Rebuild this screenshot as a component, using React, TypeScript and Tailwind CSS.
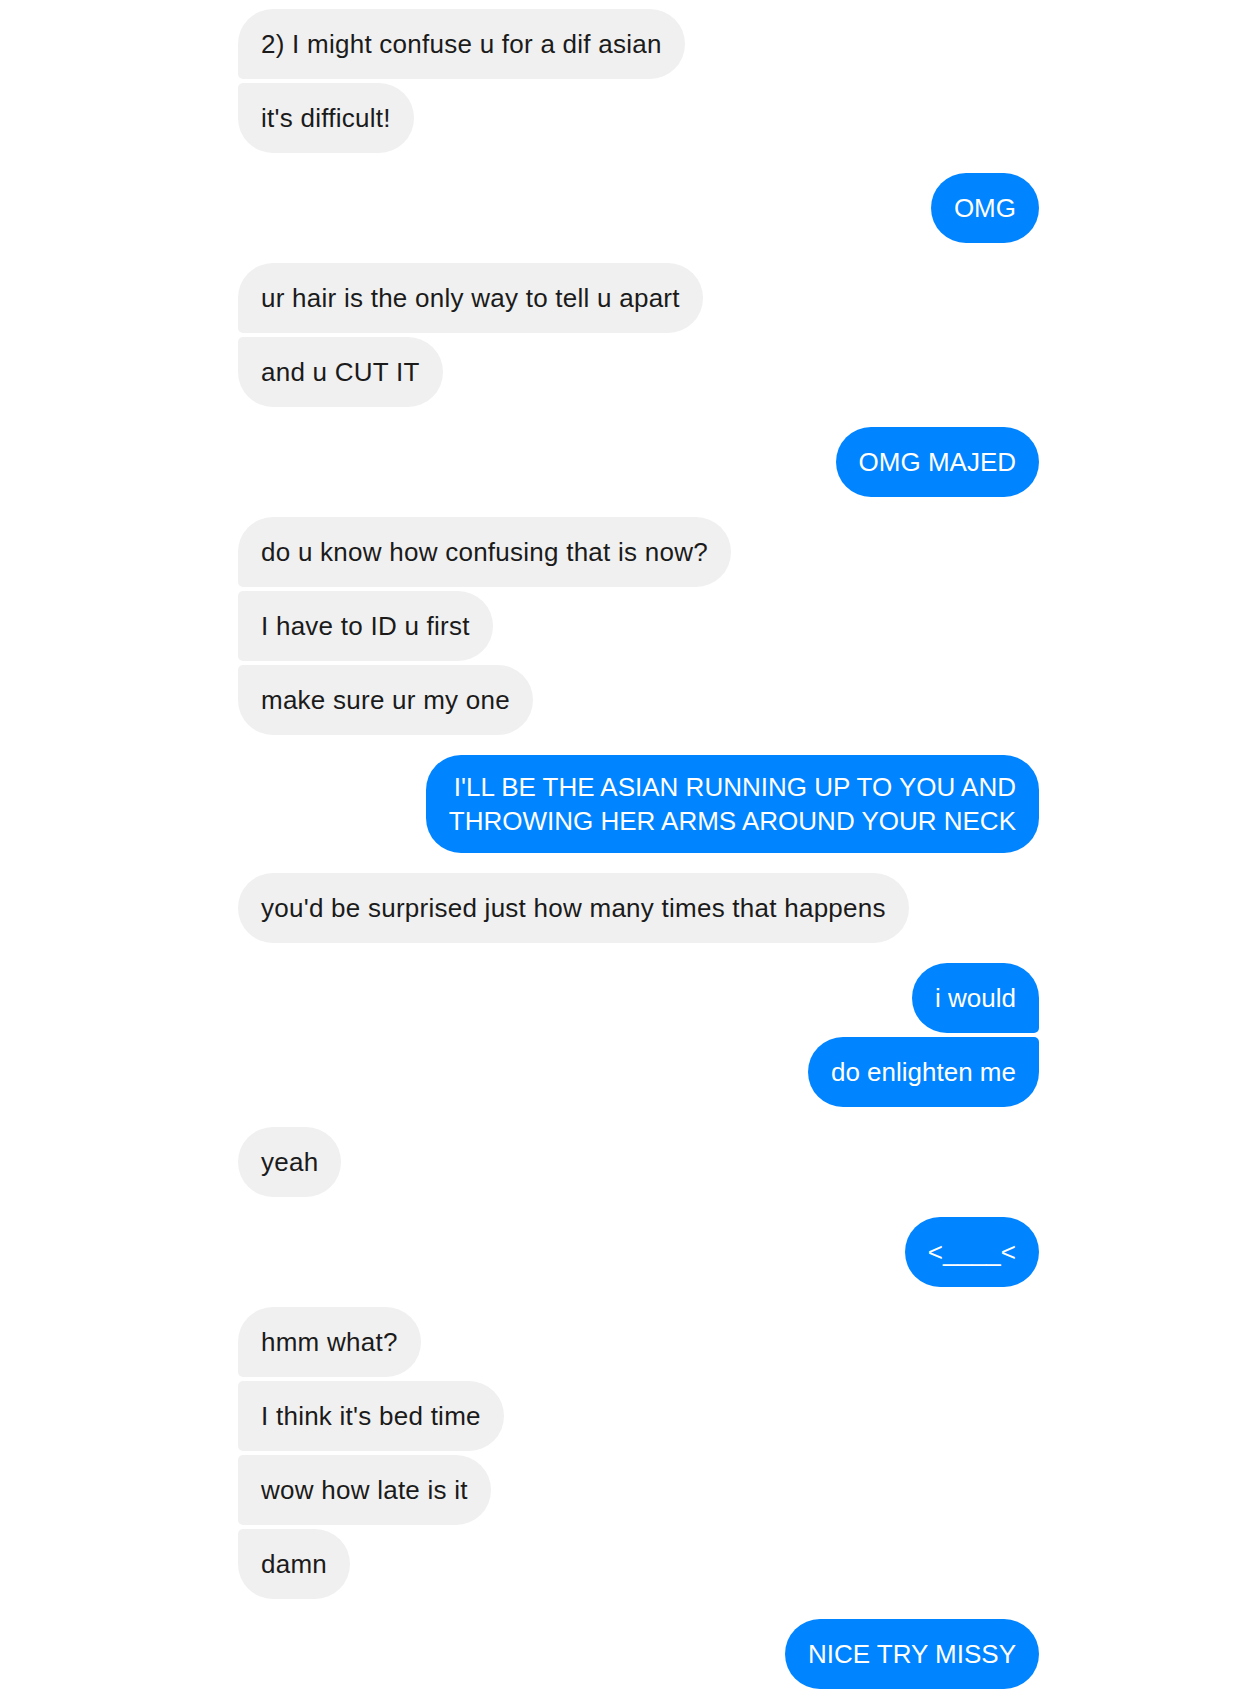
const groups: { me: boolean; lines: string[][] }[] = [
  { me: false, lines: [['2) I might confuse u for a dif asian'], ["it's difficult!"]] },
  { me: true, lines: [['OMG']] },
  { me: false, lines: [['ur hair is the only way to tell u apart'], ['and u CUT IT']] },
  { me: true, lines: [['OMG MAJED']] },
  { me: false, lines: [['do u know how confusing that is now?'], ['I have to ID u first'], ['make sure ur my one']] },
  { me: true, lines: [["I'LL BE THE ASIAN RUNNING UP TO YOU AND", 'THROWING HER ARMS AROUND YOUR NECK']] },
  { me: false, lines: [["you'd be surprised just how many times that happens"]] },
  { me: true, lines: [['i would'], ['do enlighten me']] },
  { me: false, lines: [['yeah']] },
  { me: true, lines: [['<____<']] },
  { me: false, lines: [['hmm what?'], ["I think it's bed time"], ['wow how late is it'], ['damn']] },
  { me: true, lines: [['NICE TRY MISSY']] },
];

const cornerClass = (me: boolean, idx: number, count: number) => {
  const first = idx === 0;
  const last = idx === count - 1;
  if (me) {
    return [
      'rounded-l-[35px]',
      first ? 'rounded-tr-[35px]' : 'rounded-tr-[5px]',
      last ? 'rounded-br-[35px]' : 'rounded-br-[5px]',
    ].join(' ');
  }
  return [
    'rounded-r-[35px]',
    first ? 'rounded-tl-[35px]' : 'rounded-tl-[5px]',
    last ? 'rounded-bl-[35px]' : 'rounded-bl-[5px]',
  ].join(' ');
};

const Bubble = ({ me, text, idx, count }: { me: boolean; text: string[]; idx: number; count: number }) => (
  <div className={`flex ${me ? 'justify-end' : 'justify-start'}`}>
    <div
      className={`px-[23px] text-[26px] leading-[34px] whitespace-nowrap ${text.length > 1 ? 'py-[15px]' : 'py-[18px]'} ${cornerClass(me, idx, count)} ${
        me ? 'bg-[#0084ff] text-white text-right' : 'bg-[#f0f0f0] text-[#1b1b1b] tracking-[0.25px]'
      }`}
    >
      {text.map((t, i) => (
        <div key={i}>{t}</div>
      ))}
    </div>
  </div>
);

export default function App() {
  return (
    <div className="min-h-[1701px] bg-white" style={{ fontFamily: '"Liberation Sans", Arial, sans-serif' }}>
      <div className="ml-[238px] w-[801px] pt-[9px] flex flex-col gap-[20px]">
        {groups.map((g, gi) => (
          <div key={gi} className="flex flex-col gap-[4px]">
            {g.lines.map((text, i) => (
              <Bubble key={i} me={g.me} text={text} idx={i} count={g.lines.length} />
            ))}
          </div>
        ))}
      </div>
    </div>
  );
}
